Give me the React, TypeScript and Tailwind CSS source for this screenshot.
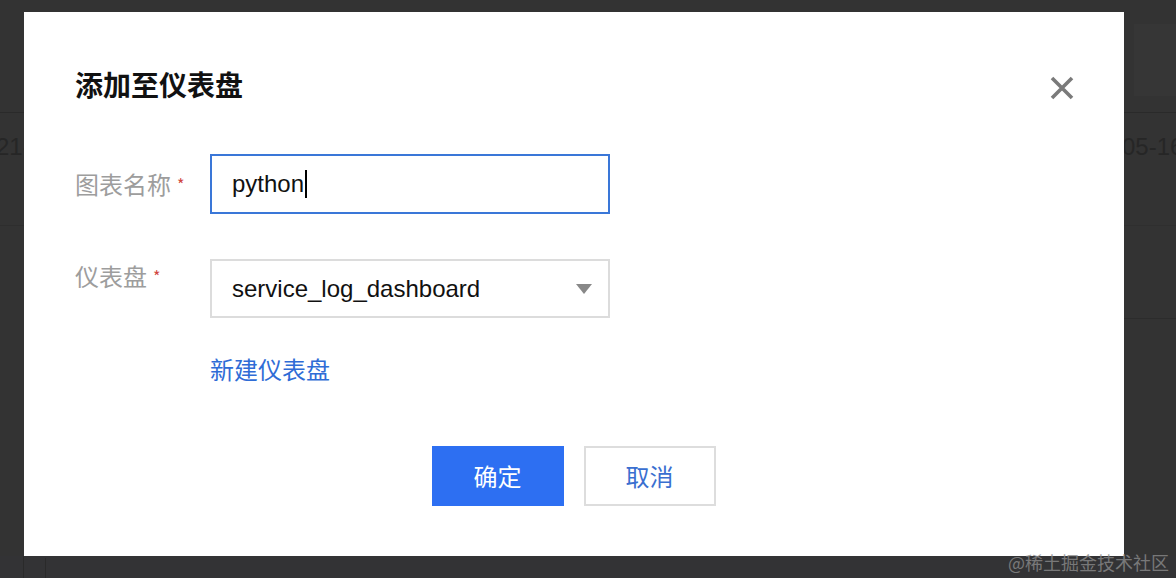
import React from "react";

const cjk = '"Noto Sans CJK SC", "Liberation Sans", sans-serif';
const latin = '"Liberation Sans", "Noto Sans CJK SC", sans-serif';

export default function App() {
  return (
    <div
      className="relative w-[1176px] h-[578px] overflow-hidden bg-[#333333]"
      style={{ fontFamily: cjk }}
    >
      {/* faint background details */}
      <div className="absolute left-0 top-[112px] w-[24px] h-px bg-[#2a2a2a]" />
      <div className="absolute left-0 top-[225px] w-[24px] h-px bg-[#2e2e2e]" />
      <div className="absolute left-[-4px] top-[132px] whitespace-nowrap text-[24px] leading-[30px] text-[#262626]" style={{ fontFamily: latin }}>21-</div>
      <div className="absolute left-[1124px] top-[112px] w-[52px] h-px bg-[#2a2a2a]" />
      <div className="absolute left-[1124px] top-[225px] w-[52px] h-px bg-[#2f2f2f]" />
      <div className="absolute left-[1124px] top-[318px] w-[52px] h-px bg-[#2c2c2c]" />
      <div className="absolute left-[1122px] top-[132px] whitespace-nowrap text-[24px] leading-[30px] text-[#262626]" style={{ fontFamily: latin }}>05-16</div>
      <div className="absolute left-[1134px] top-[24px] w-[42px] h-[72px] bg-[#363636]" />
      <div className="absolute left-[0px] top-[556px] w-[1176px] h-[22px] bg-[#333335]" />
      <div className="absolute left-[23px] top-[556px] w-px h-[22px] bg-[#2a2a2a]" />
      <div className="absolute left-[45px] top-[558px] w-px h-[20px] bg-[#2a2a2a]" />

      {/* modal */}
      <div className="relative ml-[24px] mt-[12px] w-[1100px] h-[544px] bg-white flex flex-col">
        <div className="flex items-center justify-between pl-[51px] pr-[50px] pt-[54px]">
          <div className="text-[28px] leading-[36px] font-bold text-[#111111]">添加至仪表盘</div>
          <svg width="24" height="24" viewBox="0 0 24 24" className="mt-[8px]">
            <path d="M2 2 L22 22 M22 2 L2 22" stroke="#7a7a7a" strokeWidth="3.6" strokeLinecap="butt" />
          </svg>
        </div>

        <div className="flex flex-col pl-[51px] mt-[52px]">
          {/* row 1 */}
          <div className="flex">
            <div className="w-[135px] pt-[14px] text-[24px] leading-[32px] text-[#9d9d9d] flex">
              <span>图表名称</span>
              <span className="ml-[6px] text-[16px] text-[#d0463f]">*</span>
            </div>
            <div className="w-[400px] h-[60px] border-2 border-[#3a77d8] flex items-center pl-[20px]">
              <span className="text-[24px] text-[#111111]" style={{ fontFamily: latin }}>python</span>
              <span className="w-[2px] h-[28px] bg-black ml-[1px]" />
            </div>
          </div>

          {/* row 2 */}
          <div className="flex mt-[45px]">
            <div className="w-[135px] pt-[1px] text-[24px] leading-[32px] text-[#9d9d9d] flex">
              <span>仪表盘</span>
              <span className="ml-[6px] text-[16px] text-[#d0463f]">*</span>
            </div>
            <div className="w-[400px] h-[59px] border-2 border-[#dcdcdc] flex items-center justify-between pl-[20px] pr-[16px]">
              <span className="text-[24px] text-[#111111]" style={{ fontFamily: latin }}>service_log_dashboard</span>
              <svg width="16" height="10" viewBox="0 0 16 10">
                <path d="M0 0 L16 0 L8 10 Z" fill="#888888" />
              </svg>
            </div>
          </div>

          {/* link */}
          <div className="pl-[135px] mt-[35px]">
            <span className="text-[24px] leading-[32px] text-[#2f6cd6]">新建仪表盘</span>
          </div>
        </div>

        <div className="flex justify-center gap-[20px] mt-[61px] pr-[1px]">
          <div className="w-[132px] h-[60px] bg-[#2d6ff2] flex items-center justify-center text-[24px] text-white">
            确定
          </div>
          <div className="w-[132px] h-[60px] bg-white border-2 border-[#dddddd] flex items-center justify-center text-[24px] text-[#3a6fd0]">
            取消
          </div>
        </div>
      </div>

      {/* watermark */}
      <div className="absolute left-[1008px] top-[548px] text-[18px] leading-[28px] text-[#8a8a8a] opacity-80 whitespace-nowrap">
        @稀土掘金技术社区
      </div>
    </div>
  );
}
